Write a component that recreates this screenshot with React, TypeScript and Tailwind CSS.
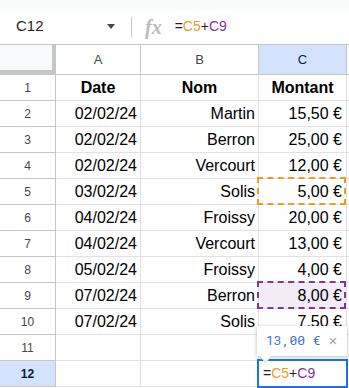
import React from "react";

const rows: [string, string, string][] = [
  ["Date", "Nom", "Montant"],
  ["02/02/24", "Martin", "15,50 €"],
  ["02/02/24", "Berron", "25,00 €"],
  ["02/02/24", "Vercourt", "12,00 €"],
  ["03/02/24", "Solis", "5,00 €"],
  ["04/02/24", "Froissy", "20,00 €"],
  ["04/02/24", "Vercourt", "13,00 €"],
  ["05/02/24", "Froissy", "4,00 €"],
  ["07/02/24", "Berron", "8,00 €"],
  ["07/02/24", "Solis", "7,50 €"],
  ["", "", ""],
  ["", "", ""],
];

const cell = "h-[26px] border-r border-b border-[#e1e1e1] flex items-center text-[16px] text-black pt-[1px]";

const App = () => {
  return (
    <div className="w-[349px] h-[388px] overflow-hidden bg-white font-['Liberation_Sans',Arial,sans-serif]">
      <div className="h-[9px] bg-[#f9fbfd]" />

      {/* formula bar */}
      <div className="h-[36px] border-b border-[#c4c7c5] flex items-center">
        <div className="w-[124px] flex items-center pl-4 pr-[9px] justify-between">
          <span className="text-[15px] text-[#1f1f1f]">C12</span>
          <span className="w-0 h-0 border-l-[4.5px] border-r-[4.5px] border-t-[5px] border-l-transparent border-r-transparent border-t-[#444746]" />
        </div>
        <div className="w-px h-[20px] bg-[#c4c7c5] ml-[7px]" />
        <span className="ml-[13px] text-[20px] italic font-semibold text-[#b9bcbf] font-['Liberation_Serif',serif] leading-none">
          fx
        </span>
        <span className="ml-[13px] text-[14px] text-[#1f1f1f]">
          =<span className="text-[#f29b1e]">C5</span>+<span className="text-[#7e3794]">C9</span>
        </span>
      </div>

      {/* grid */}
      <div className="relative grid grid-cols-[56px_85px_118px_88px_1fr]">
        {/* header row */}
        <div className="h-[30px] bg-[#f8f9fa] border-r-4 border-b-[5px] border-[#c4c7c5]" />
        {["A", "B", "C"].map((l) => (
          <div
            key={l}
            className={`h-[30px] border-r border-b border-[#c4c7c5] flex items-center justify-center text-[13px] ${
              l === "C" ? "bg-[#d3e3fd] text-[#041e49]" : "text-[#444746]"
            }`}
          >
            {l}
          </div>
        ))}
        <div className="h-[30px] border-b border-[#c4c7c5]" />

        {rows.map((r, i) => {
          const n = i + 1;
          const head = n === 1;
          return (
            <React.Fragment key={n}>
              <div
                className={`h-[26px] border-r border-b border-[#c4c7c5] flex items-center justify-center text-[12px] ${
                  n === 12 ? "bg-[#d3e3fd] text-[#041e49] font-bold" : "text-[#444746]"
                }`}
              >
                {n}
              </div>
              <div className={`${cell} ${head ? "justify-center font-bold" : "justify-end pr-[3px]"}`}>{r[0]}</div>
              <div className={`${cell} ${head ? "justify-center font-bold" : "justify-end pr-[3px]"}`}>{r[1]}</div>
              <div
                className={`${cell} relative ${head ? "justify-center font-bold" : "justify-end pr-[4px]"} ${
                  n === 9 ? "bg-[#f3ebf6]" : ""
                }`}
              >
                {r[2]}
                {n === 5 && (
                  <div className="absolute -left-[2px] -top-[2px] right-0 bottom-[-1px] border-2 border-dashed border-[#f29b1e]" />
                )}
                {n === 9 && (
                  <div className="absolute -left-[2px] -top-[2px] right-0 bottom-[-1px] border-2 border-dashed border-[#7e3794]" />
                )}
                {n === 12 && (
                  <>
                    <div className="absolute -left-[2px] -top-[2px] -right-[2px] -bottom-[2px] border-2 border-[#1a73e8] bg-white flex items-center pl-[4px] text-[14px] text-[#1f1f1f]">
                      =<span className="text-[#f29b1e]">C5</span>+<span className="text-[#7e3794]">C9</span>
                    </div>
                    <div className="absolute left-[-2px] bottom-[30px] w-[90px] h-[30px] bg-white shadow-[0_1px_4px_rgba(0,0,0,0.28)] flex items-center pl-[9px] font-['Roboto_Mono','DejaVu_Sans_Mono',monospace] text-[13px]">
                      <span className="text-[#3f6fd8]">13,00 €</span>
                      <span className="ml-[8px] text-[#9aa0a6] text-[15px] font-['Liberation_Sans',sans-serif]">×</span>
                      <div className="absolute left-[4px] -bottom-[5px] w-[9px] h-[9px] bg-white rotate-45 border-r border-b border-[#d0d0d0]" />
                    </div>
                  </>
                )}
              </div>
              <div className="h-[26px] border-b border-[#e1e1e1]" />
            </React.Fragment>
          );
        })}
      </div>
    </div>
  );
};

export default App;
